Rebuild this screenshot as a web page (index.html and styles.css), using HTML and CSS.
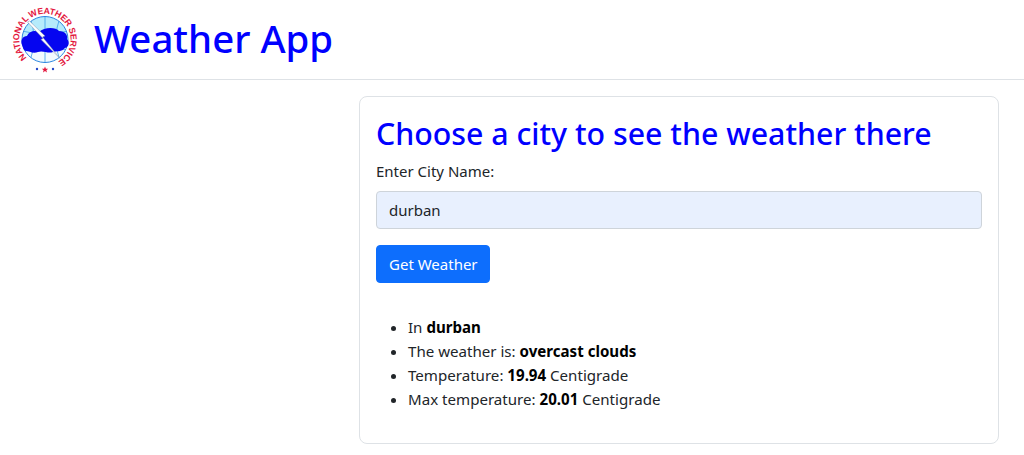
FILE: index.html
```html
<!DOCTYPE html>
<html lang="en">
<head>
    <meta charset="UTF-8">
    <meta name="viewport" content="width=device-width, initial-scale=1.0">
    <title>Weather App</title>
    <link rel="stylesheet" href="styles.css">
</head>
<body>
    <header class="topbar">
        <svg class="logo" viewBox="0 0 68 72" width="68" height="72" aria-hidden="true">
            <defs>
                <path id="ring" d="M14.800 53.700 A25.700 25.700 0 1 1 46.200 57.500"/>
                <clipPath id="globe"><circle cx="33" cy="35.500" r="23"/></clipPath>
            </defs>
            <g clip-path="url(#globe)">
                <rect x="9" y="11" width="48" height="25" fill="#b5ebfb"/>
                <rect x="9" y="36" width="48" height="23" fill="#f2fbff"/>
                <path d="M33 11 V59 M18 13 Q26 35 18 57 M48 13 Q40 35 48 57 M10 27 Q33 33 56 27 M11 46 Q33 40 55 46" fill="none" stroke="#3aa0e8" stroke-width="0.8"/>
            </g>
            <circle cx="33" cy="35.500" r="23" fill="none" stroke="#2b86e0" stroke-width="1"/>
            <path d="M10 41 C8 36 11 32 15 32 C17 27 23 26 27 28 C32 23 44 23 47 27 C53 27 56 31 55 35 C58 38 57 43 53 44 C50 48 44 47 41 48 C36 50 31 46 26 48 C21 50 17 47 14 47 C12 47 11 44 10 41Z" fill="#0505f0"/>
            <path d="M15.500 18 L17.500 17 L33 32 L30.500 33 L48 54.500 L29 35.500 L31 34.500Z" fill="#ffffff" stroke="#8494ac" stroke-width="0.5"/>
            <text class="ring-text"><textPath href="#ring" textLength="127">NATIONAL WEATHER SERVICE</textPath></text>
            <circle cx="25" cy="65" r="1.200" fill="#2447c8"/>
            <circle cx="41" cy="65" r="1.200" fill="#2447c8"/>
            <path d="M33 62.500 L33.900 64.700 L36.200 64.800 L34.400 66.200 L35 68.400 L33 67.100 L31 68.400 L31.600 66.200 L29.800 64.800 L32.100 64.700Z" fill="#e3173e"/>
        </svg>
        <h1>Weather App</h1>
    </header>

    <main class="content">
        <section class="card">
            <h2>Choose a city to see the weather there</h2>
            <form class="city-form">
                <label for="city">Enter City Name:</label>
                <input id="city" type="text" value="durban">
                <button type="button">Get Weather</button>
            </form>
            <ul class="results">
                <li>In <strong>durban</strong></li>
                <li>The weather is: <strong>overcast clouds</strong></li>
                <li>Temperature: <strong>19.94</strong> Centigrade</li>
                <li>Max temperature: <strong>20.01</strong> Centigrade</li>
            </ul>
        </section>
    </main>
</body>
</html>
```

FILE: styles.css
```css
body {
    font-family: "Noto Sans", "Open Sans", sans-serif;
    font-size: 15px;
    line-height: 24px;
    color: #212529;
    background: #fff;
    margin: 0;
}
.topbar {
    display: flex;
    align-items: center;
    gap: 14px;
    height: 79px;
    padding-left: 12px;
    border-bottom: 1px solid #dee2e6;
}
.logo {
    flex: none;
    overflow: visible;
}
.ring-text {
    font-family: "Liberation Sans", sans-serif;
    font-size: 8.8px;
    font-weight: 700;
    fill: #e3173e;
}
h1 {
    font-size: 38.4px;
    font-weight: 500;
    line-height: 48px;
    color: #0000ff;
    margin: 0 0 4px;
}
h2 {
    font-size: 30.3px;
    font-weight: 500;
    line-height: 38px;
    color: #0000ff;
    margin: 0 0 6px;
}
.content {
    display: flex;
    justify-content: flex-end;
    padding: 16px 25px 0 0;
}
.card {
    box-sizing: border-box;
    width: 640px;
    height: 348px;
    padding: 18px 16px 16px;
    border: 1px solid #dee2e6;
    border-radius: 8px;
}
.city-form {
    display: flex;
    flex-direction: column;
    align-items: flex-start;
}
label {
    margin-bottom: 8px;
}
input {
    box-sizing: border-box;
    width: 100%;
    height: 38px;
    padding: 6px 12px;
    font: inherit;
    color: #212529;
    background: #e8f0fe;
    border: 1px solid #ced4da;
    border-radius: 4px;
    margin-bottom: 16px;
}
button {
    box-sizing: border-box;
    height: 38px;
    padding: 6px 11px 6px 12px;
    font: inherit;
    color: #fff;
    background: #0d6efd;
    border: 1px solid #0d6efd;
    border-radius: 4px;
}
.results {
    font-size: 15.1px;
    margin: 32px 0 0;
    padding-left: 32px;
    color: #212529;
}
strong {
    color: #000;
    font-weight: 700;
}
```
